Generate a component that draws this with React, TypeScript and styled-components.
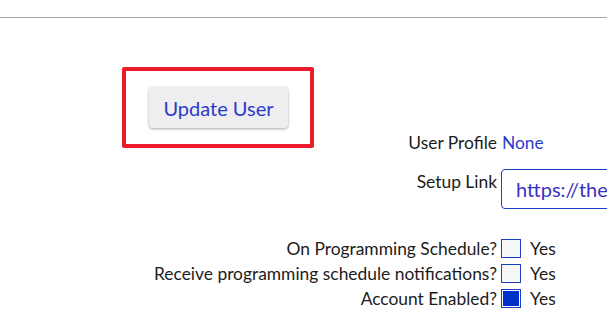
import React from "react";
import styled, { createGlobalStyle } from "styled-components";

const GlobalStyle = createGlobalStyle`
    html, body {
        margin: 0;
        padding: 0;
        background: #fff;
        overflow: hidden;
    }
    body {
        font-family: Lato, "Open Sans", sans-serif;
        color: #1c1c1c;
    }
`

interface IFlagRow {
    label: string,
    checked: boolean
}

const flags: IFlagRow[] = [
    { label: "On Programming Schedule?", checked: false },
    { label: "Receive programming schedule notifications?", checked: false },
    { label: "Account Enabled?", checked: true },
]

const App: React.FC = () => {
    return (
        <>
            <GlobalStyle />
            <TopBar />
            <Page>
                <Highlight>
                    <UpdateButton>Update User</UpdateButton>
                </Highlight>
                <Form>
                    <Label>User Profile</Label>
                    <LinkValue>None</LinkValue>

                    <Label $top>Setup Link</Label>
                    <LinkInput readOnly value="https://thesetup.example.com/setup" />

                    <Spacer />
                    <Spacer />

                    {flags.map((f) => (
                        <React.Fragment key={f.label}>
                            <Label>{f.label}</Label>
                            <CheckCell>
                                <Box $checked={f.checked} />
                                <span>Yes</span>
                            </CheckCell>
                        </React.Fragment>
                    ))}
                </Form>
            </Page>
        </>
    )
}

const TopBar = styled.div`
    height: 17px;
    border-bottom: 1px solid #a6a6a6;
`

const Page = styled.div`
    display: flex;
    flex-direction: column;
`

const Highlight = styled.div`
    box-sizing: border-box;
    margin: 49px 0 0 122px;
    width: 192px;
    height: 81px;
    border: 4px solid #ec1c2a;
    border-radius: 2px;
    display: flex;
    align-items: center;
    justify-content: center;
    padding-left: 1px;
`

const UpdateButton = styled.button`
    box-sizing: border-box;
    width: 139px;
    height: 41px;
    border: none;
    border-radius: 4px;
    background: #eeeef1;
    box-shadow: 0 1px 3px rgba(0, 0, 0, 0.35);
    font-family: Lato, sans-serif;
    font-size: 20px;
    color: #2b3bc9;
    cursor: pointer;
`

const Form = styled.div`
    display: grid;
    grid-template-columns: 497px 1fr;
    column-gap: 4px;
    align-items: center;
    margin-top: -18.5px;
    font-size: 17.4px;
`

const Label = styled.div<{ $top?: boolean }>`
    text-align: right;
    white-space: nowrap;
    align-self: ${(p) => (p.$top ? "start" : "center")};
    margin-top: ${(p) => (p.$top ? "14px" : "0")};
    line-height: 25px;
`

const LinkValue = styled.div`
    color: #2b3bc9;
    line-height: 25px;
    padding-left: 1px;
`

const LinkInput = styled.input`
    box-sizing: border-box;
    margin-top: 14.5px;
    width: 300px;
    height: 40px;
    border: 1px solid #1f3fc4;
    border-radius: 4px;
    padding: 0 14px;
    font-family: Lato, sans-serif;
    font-size: 20px;
    color: #3a2fbf;
    outline: none;
`

const Spacer = styled.div`
    height: 27px;
`

const CheckCell = styled.div`
    display: flex;
    align-items: center;
    gap: 9px;
    height: 25px;
    line-height: 25px;
`

const Box = styled.div<{ $checked: boolean }>`
    box-sizing: border-box;
    width: 20px;
    height: 19px;
    border: 1px solid #1a3dc4;
    background: ${(p) => (p.$checked ? "#0030c8" : "#f7f7fa")};
    box-shadow: ${(p) => (p.$checked ? "inset 0 0 0 1px #fff" : "none")};
`

export default App;
